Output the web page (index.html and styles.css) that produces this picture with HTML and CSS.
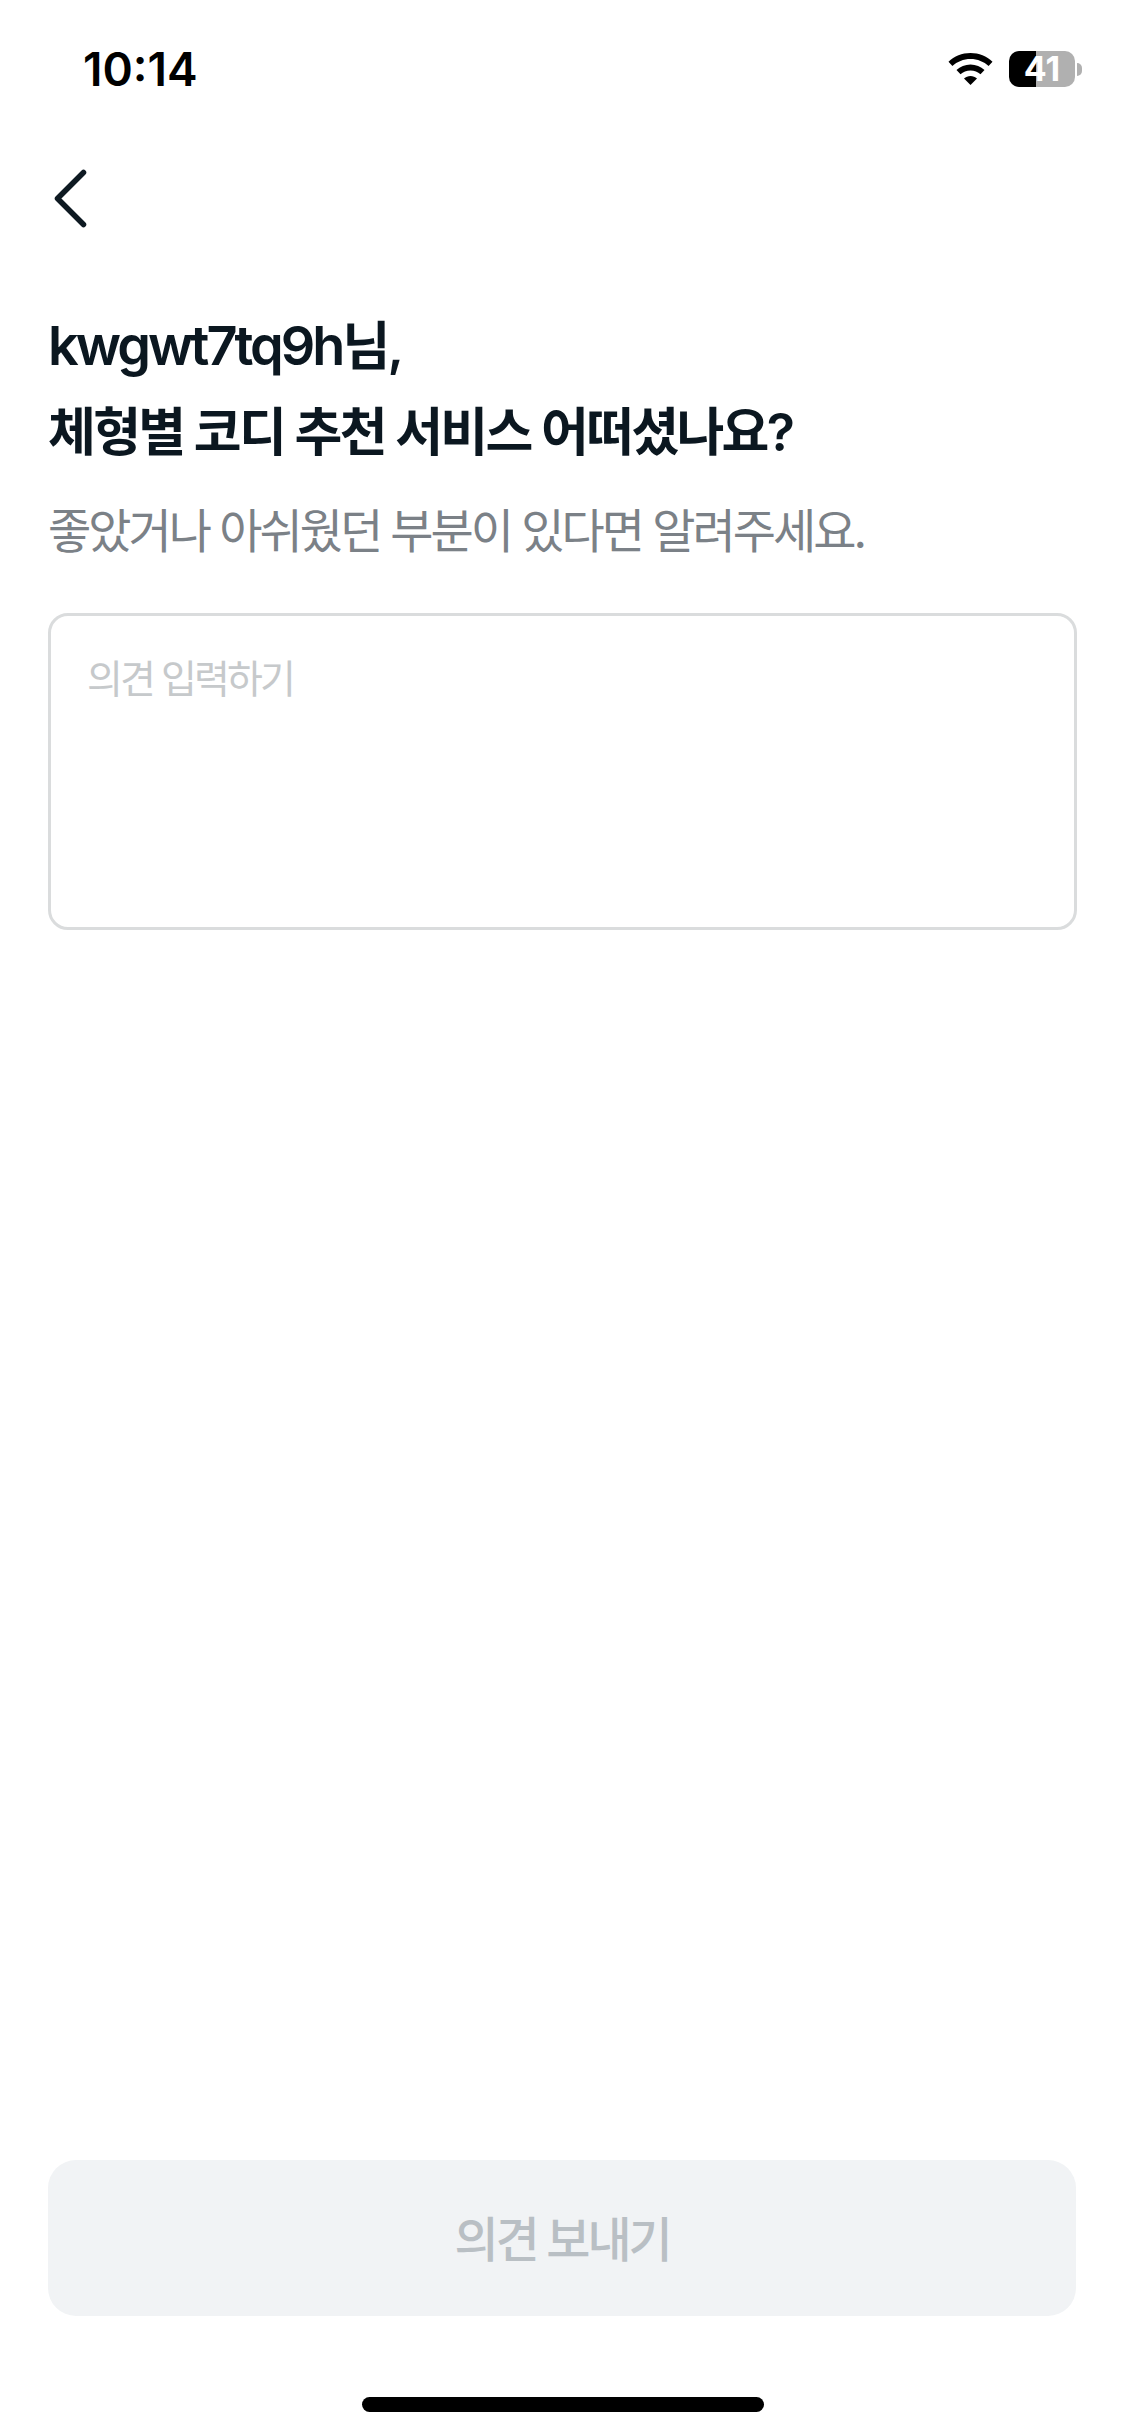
FILE: index.html
```html
<!DOCTYPE html>
<html lang="ko">
<head>
<meta charset="utf-8">
<title>의견 보내기</title>
<link rel="stylesheet" href="styles.css">
</head>
<body>
<div class="page">
  <header class="status-bar">
    <span class="clock">10:14</span>
    <div class="status-icons">
      <svg class="wifi" viewBox="0 0 45 32" aria-hidden="true">
        <path d="M22.5 0C14 0 6.300 3.300 0.500 8.700L4.400 13C9.100 8.700 15.500 6 22.500 6S35.900 8.700 40.600 13L44.500 8.700C38.700 3.300 31 0 22.500 0Z"/>
        <path d="M22.500 11.500C17.100 11.500 12.200 13.600 8.500 17L12.500 21.300C15.100 18.900 18.600 17.500 22.500 17.500S29.900 18.900 32.500 21.300L36.500 17C32.800 13.600 27.900 11.500 22.500 11.500Z"/>
        <path d="M22.500 23C20 23 17.800 23.900 16 25.400L22.500 32L29 25.400C27.200 23.900 25 23 22.500 23Z"/>
      </svg>
      <div class="battery"><span>41</span></div>
    </div>
  </header>
  <nav class="nav">
    <svg class="back" viewBox="0 0 36 62" aria-hidden="true">
      <path d="M30.500 3.500L4.500 29.500L30.500 55.500"/>
    </svg>
  </nav>
  <main class="content">
    <h1 class="title"><span class="user-id">kwgwt7tq9h</span>님,<br>체형별 코디 추천 서비스 어떠셨나요?</h1>
    <p class="subtitle">좋았거나 아쉬웠던 부분이 있다면 알려주세요.</p>
    <div class="field"><span class="placeholder">의견 입력하기</span></div>
  </main>
  <div class="action">
    <button class="submit" type="button">의견 보내기</button>
  </div>
  <div class="home-area"><div class="home-bar"></div></div>
</div>
</body>
</html>
```

FILE: styles.css
```css
* { box-sizing: border-box; }
html, body { margin: 0; padding: 0; background: #fff; }
body { font-family: Inter, "Noto Sans CJK KR", sans-serif; }
.page { width: 1125px; height: 2436px; display: flex; flex-direction: column; background: #fff; }

.status-bar { height: 138px; padding: 44px 50px 0 83px; display: flex; justify-content: space-between; align-items: flex-start; flex: none; }
.clock { font-size: 46px; line-height: 50px; font-weight: 600; color: #000; letter-spacing: 0; }
.status-icons { display: flex; align-items: center; gap: 16px; margin-top: 7px; }
.wifi { width: 45px; height: 32px; fill: #000; display: block; }
.battery { position: relative; width: 66px; height: 36px; border-radius: 10px; background: linear-gradient(to right, #000 0, #000 41%, #b0b0b0 41%, #b0b0b0 100%); display: flex; align-items: center; justify-content: center; color: #fff; font-size: 34px; font-weight: 700; line-height: 36px; }
.battery::after { content: ""; position: absolute; left: 68px; top: 12px; width: 5px; height: 13px; border-radius: 0 6px 6px 0; background: #b0b0b0; }

.nav { height: 166px; padding: 31px 0 0 53px; flex: none; }
.back { width: 36px; height: 62px; display: block; fill: none; stroke: #0e1a22; stroke-width: 5.500; stroke-linecap: round; stroke-linejoin: round; }

.content { flex: 1; padding: 0 48px 0 48px; }
.title { margin: 0; font-size: 52px; line-height: 86px; font-weight: 600; color: #0b1720; letter-spacing: -2.700px; }
.user-id { font-size: 54px; line-height: 80px; letter-spacing: -3px; }
.subtitle { margin: 20px 0 0; font-size: 47px; line-height: 70px; font-weight: 400; color: #7b8187; letter-spacing: -3px; }
.field { margin-top: 47px; height: 317px; border: 3px solid #dadcdd; border-radius: 20px; padding: 37px 36px; }
.placeholder { display: block; font-size: 39px; line-height: 52px; color: #c6c9cb; letter-spacing: -2.900px; }

.action { padding: 0 49px 0 48px; flex: none; }
.submit { display: flex; width: 100%; height: 156px; align-items: center; justify-content: center; border: 0; border-radius: 28px; background: #f1f3f5; color: #b9bfc4; font-family: inherit; font-size: 48px; font-weight: 500; letter-spacing: -3.100px; padding: 0 0 4px; }

.home-area { height: 120px; flex: none; padding-top: 81px; display: flex; justify-content: center; }
.home-bar { width: 402px; height: 15px; border-radius: 8px; background: #000; }
```
